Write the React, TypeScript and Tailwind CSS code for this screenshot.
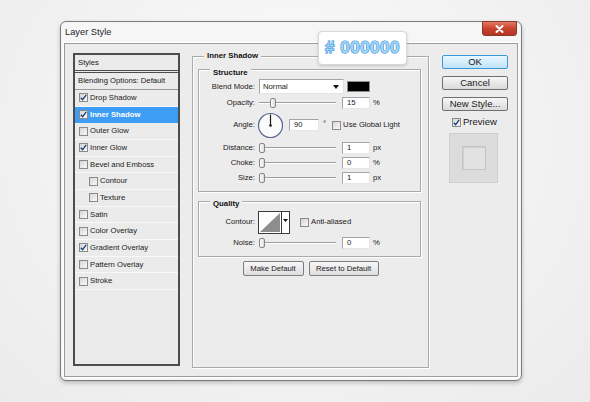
import React from "react";

function Box({ checked = false }: { checked?: boolean }) {
  return (
    <span className="flex h-[9px] w-[9px] shrink-0 items-center justify-center border border-[#8a8a8a] bg-[linear-gradient(135deg,#d6d6d6,#f9f9f9)]">
      {checked && (
        <svg width="7" height="7" viewBox="0 0 7 7">
          <path d="M0.8 3.7 L2.6 5.7 L6.2 0.8" fill="none" stroke="#1d3c78" strokeWidth="1.3" />
        </svg>
      )}
    </span>
  );
}

function Group({ title, className, children }: { title: string; className: string; children: React.ReactNode }) {
  return (
    <div className={`border border-[#a9a9a9] shadow-[inset_1px_1px_0_#fff,1px_1px_0_#fff] ${className}`}>
      <div className="-mt-[6px] ml-[11px] w-fit bg-[#ececec] px-[3px] text-[7.8px] font-bold leading-[10px] text-[#111]">
        {title}
      </div>
      {children}
    </div>
  );
}

function Slider({ value }: { value: number }) {
  return (
    <div className="relative flex h-[10px] w-[77px] shrink-0 items-center">
      <div className="h-[2px] w-full border-t border-[#9d9d9d] bg-white" />
      <div
        className="absolute top-[0px] h-[10px] w-[6px] rounded-[2px] border border-[#858585] bg-[linear-gradient(90deg,#fdfdfd,#dcdcdc)]"
        style={{ left: `${(value / 100) * 71}px` }}
      />
    </div>
  );
}

function Field({ value, w = "w-[28px]" }: { value: string; w?: string }) {
  return (
    <div
      className={`${w} h-[12px] shrink-0 border border-t-[#a4a4a4] border-l-[#a4a4a4] border-r-[#e6e6e6] border-b-[#e6e6e6] bg-white pl-[4px] text-[7.7px] leading-[10px]`}
    >
      {value}
    </div>
  );
}

function Label({ children }: { children: React.ReactNode }) {
  return <div className="w-[56px] shrink-0 text-right leading-[10px]">{children}</div>;
}

const styles: { name: string; checked?: boolean; selected?: boolean; indent?: boolean }[] = [
  { name: "Drop Shadow", checked: true },
  { name: "Inner Shadow", checked: true, selected: true },
  { name: "Outer Glow" },
  { name: "Inner Glow", checked: true },
  { name: "Bevel and Emboss" },
  { name: "Contour", indent: true },
  { name: "Texture", indent: true },
  { name: "Satin" },
  { name: "Color Overlay" },
  { name: "Gradient Overlay", checked: true },
  { name: "Pattern Overlay" },
  { name: "Stroke" },
];

export default function App() {
  return (
    <div className="relative h-[402px] w-[590px] overflow-hidden bg-[radial-gradient(ellipse_at_50%_35%,#fdfdfd_0%,#f4f4f4_45%,#ebebeb_100%)] pl-[60px] pt-[21px] font-['Liberation_Sans',Arial,sans-serif] text-[7.7px] text-[#1a1a1a]">
      {/* Window */}
      <div className="relative flex h-[360px] w-[462px] flex-col rounded-[6px] border border-[#7b7b7b] bg-[#f6f6f6] shadow-[0_2px_4px_rgba(0,0,0,0.22)]">
        {/* close button */}
        <div className="absolute right-[4px] top-[-1px] flex h-[15px] w-[35px] items-center justify-center rounded-b-[3px] border border-[#8a3a2c] bg-[linear-gradient(#e07a66,#c9442f_50%,#b53523)]">
          <svg width="9" height="8" viewBox="0 0 9 8">
            <path d="M1.5 1 L7.5 7 M7.5 1 L1.5 7" stroke="#fff" strokeWidth="2" strokeLinecap="round" />
          </svg>
        </div>

        {/* title */}
        <div className="flex h-[21px] items-center pl-[4px] text-[9.3px] text-[#1e1e1e]">Layer Style</div>

        {/* frame */}
        <div className="mx-[3px] mb-[3px] flex h-[334px] items-start border border-[#9d9d9d] bg-[#ececec] shadow-[0_0_0_1px_#fff]">
          {/* styles list */}
          <div className="ml-[8px] mt-[9px] flex h-[313px] w-[107px] shrink-0 flex-col border-2 border-[#4d4d4d] bg-[#ebebeb]">
            <div className="flex h-[16px] items-center border-b border-[#4d4d4d] pl-[3px]">Styles</div>
            <div className="mt-[1px] flex h-[18px] items-center border-y border-t-[#4d4d4d] border-b-[#9a9a9a] pl-[3px]">
              Blending Options: Default
            </div>
            {styles.map((s) => (
              <div
                key={s.name}
                className={`flex h-[16.67px] items-center gap-[2px] border-b ${
                  s.selected ? "border-[#3d9cf4] bg-[#3d9cf4] font-bold text-white" : "border-[#f8f8f8]"
                } ${s.indent ? "pl-[14px]" : "pl-[4px]"}`}
              >
                <Box checked={s.checked} />
                <span>{s.name}</span>
              </div>
            ))}
          </div>

          {/* main panel */}
          <Group title="Inner Shadow" className="ml-[12px] mt-[12px] h-[312px] w-[237px] shrink-0">
            <Group title="Structure" className="ml-[5px] mr-[7px] mt-[8px] pb-[6px] pt-[4px]">
              <div className="flex h-[17px] items-center">
                <Label>Blend Mode:</Label>
                <div className="ml-[4px] flex h-[15px] w-[85px] items-center justify-between border border-t-[#a4a4a4] border-l-[#a4a4a4] border-r-[#e4e4e4] border-b-[#e4e4e4] bg-white pl-[3px] pr-[4px]">
                  <span>Normal</span>
                  <svg width="6" height="4" viewBox="0 0 6 4">
                    <path d="M0 0 H6 L3 4 Z" fill="#111" />
                  </svg>
                </div>
                <div className="ml-[3px] h-[11px] w-[23px] border border-[#8c8c8c] bg-black" />
              </div>
              <div className="flex h-[15px] items-center">
                <Label>Opacity:</Label>
                <div className="ml-[4px]">
                  <Slider value={15} />
                </div>
                <div className="ml-[6px]">
                  <Field value="15" />
                </div>
                <span className="ml-[3px]">%</span>
              </div>
              <div className="flex h-[30px] items-center">
                <Label>Angle:</Label>
                <svg className="ml-[2px] shrink-0" width="27" height="27" viewBox="0 0 27 27">
                  <circle cx="13.5" cy="13.5" r="12" fill="#fbfbfb" stroke="#56648f" strokeWidth="1.2" />
                  <path d="M13.5 13.5 V2.5" stroke="#1a1a1a" strokeWidth="1.2" />
                  <circle cx="13.5" cy="13.5" r="1.3" fill="#1a1a1a" />
                </svg>
                <div className="ml-[5px]">
                  <Field value="90" w="w-[30px]" />
                </div>
                <span className="ml-[4px] self-start pt-[9px] leading-[10px]">°</span>
                <div className="ml-[6px]">
                  <Box />
                </div>
                <span className="ml-[2px]">Use Global Light</span>
              </div>
              {[
                ["Distance:", "1", "px"],
                ["Choke:", "0", "%"],
                ["Size:", "1", "px"],
              ].map(([l, v, u]) => (
                <div key={l} className="flex h-[15px] items-center">
                  <Label>{l}</Label>
                  <div className="ml-[4px]">
                    <Slider value={0} />
                  </div>
                  <div className="ml-[6px]">
                    <Field value={v} />
                  </div>
                  <span className="ml-[3px]">{u}</span>
                </div>
              ))}
            </Group>

            <Group title="Quality" className="ml-[5px] mr-[7px] mt-[9px] pb-[6px] pt-[3px]">
              <div className="flex h-[26px] items-center">
                <Label>Contour:</Label>
                <div className="ml-[3px] flex h-[23px] w-[32px] border border-[#3a3a3a] bg-white">
                  <svg width="22" height="21" viewBox="0 0 22 21" className="shrink-0">
                    <path d="M1 20 L21 1 V20 Z" fill="#8e8e8e" />
                  </svg>
                  <div className="flex flex-1 justify-center border-l border-[#3a3a3a] pt-[7px]">
                    <svg width="5" height="3" viewBox="0 0 5 3">
                      <path d="M0 0 H5 L2.5 3 Z" fill="#111" />
                    </svg>
                  </div>
                </div>
                <div className="ml-[10px]">
                  <Box />
                </div>
                <span className="ml-[2px]">Anti-aliased</span>
              </div>
              <div className="flex h-[15px] items-center">
                <Label>Noise:</Label>
                <div className="ml-[4px]">
                  <Slider value={0} />
                </div>
                <div className="ml-[6px]">
                  <Field value="0" />
                </div>
                <span className="ml-[3px]">%</span>
              </div>
            </Group>

            <div className="mt-[4px] flex justify-center gap-[5px]">
              <div className="flex h-[15px] w-[61px] items-center justify-center rounded-[2px] border border-[#7d7d7d] bg-[linear-gradient(#f7f7f7,#dedede)]">
                Make Default
              </div>
              <div className="flex h-[15px] w-[70px] items-center justify-center rounded-[2px] border border-[#7d7d7d] bg-[linear-gradient(#f7f7f7,#dedede)]">
                Reset to Default
              </div>
            </div>
          </Group>

          {/* right column */}
          <div className="ml-[13px] mt-[11px] flex w-[66px] shrink-0 flex-col text-[9.5px]">
            <div className="flex h-[14px] items-center justify-center rounded-[2px] border border-[#3a9ad6] bg-[linear-gradient(#eaf7fe,#bee3f7)]">
              OK
            </div>
            <div className="mt-[7px] flex h-[14px] items-center justify-center rounded-[2px] border border-[#707070] bg-[linear-gradient(#f7f7f7,#dadada)]">
              Cancel
            </div>
            <div className="mt-[7px] flex h-[14px] items-center justify-center rounded-[2px] border border-[#707070] bg-[linear-gradient(#f7f7f7,#dadada)]">
              New Style...
            </div>
            <div className="mt-[6px] flex h-[10px] items-center gap-[2px] pl-[10px]">
              <Box checked />
              <span>Preview</span>
            </div>
            <div className="ml-[7px] mt-[6px] flex h-[50px] w-[49px] items-center justify-center border border-[#cfcfcf] bg-[#dcdcdc]">
              <div className="h-[24px] w-[24px] border border-[#c6c6c6] bg-[#e2e2e2] shadow-[inset_1px_1px_0_#d0d0d0]" />
            </div>
          </div>
        </div>
      </div>

      {/* callout */}
      <div className="absolute left-[318px] top-[31px] flex h-[34px] w-[89px] items-center justify-center rounded-[4px] border border-[#d9d9d9] bg-white shadow-[0_1px_3px_rgba(0,0,0,0.18)]">
        <span className="text-[17px] font-bold tracking-[0.5px] text-[#9fd4f6] [-webkit-text-stroke:1.1px_#2b86d6] [paint-order:stroke_fill]">
          # 000000
        </span>
      </div>
    </div>
  );
}
